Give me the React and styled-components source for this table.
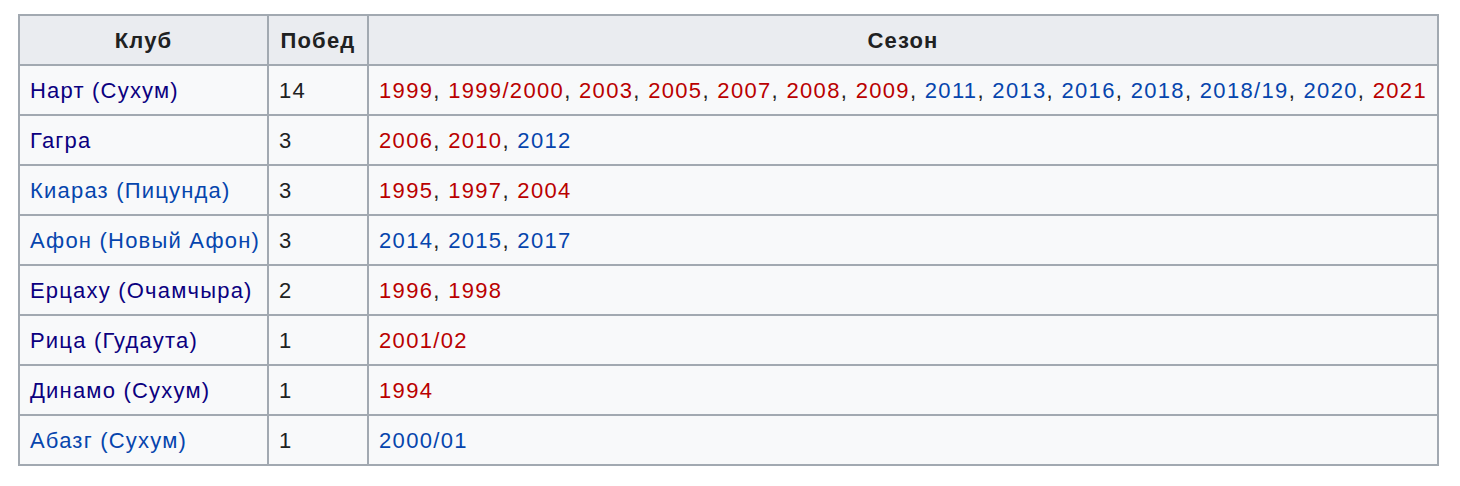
import React from "react";
import styled, { createGlobalStyle } from "styled-components";

const GlobalStyle = createGlobalStyle`
  body {
    margin: 0;
    background: #ffffff;
    font-family: "Liberation Sans", Arial, sans-serif;
  }
`;

const Page = styled.div`
  padding: 14px 21px 0 18px;
`;

const Table = styled.table`
  width: 1421px;
  border-collapse: collapse;
  table-layout: fixed;
  background: #f8f9fa;
  color: #202122;
  font-size: 22px;
  letter-spacing: 1.2px;
  border: 2px solid #a2a9b1;
`;

const Th = styled.th`
  height: 50px;
  padding: 1px 10px 0;
  background: #eaecf0;
  border: 2px solid #a2a9b1;
  font-weight: bold;
  text-align: center;
  box-sizing: border-box;
`;

const Td = styled.td`
  height: 50px;
  padding: 2px 10px 0;
  border: 2px solid #a2a9b1;
  white-space: nowrap;
  box-sizing: border-box;
`;

const Season = styled(Td)`
  letter-spacing: 1.33px;
`;

const colors = {
  visited: "#0b0080",
  blue: "#0645ad",
  red: "#ba0000",
};

const Link = styled.a`
  color: ${(p) => colors[p.$kind]};
  text-decoration: none;
`;

const rows = [
  {
    club: "Нарт (Сухум)",
    kind: "visited",
    wins: 14,
    seasons: [
      ["1999", "red"],
      ["1999/2000", "red"],
      ["2003", "red"],
      ["2005", "red"],
      ["2007", "red"],
      ["2008", "red"],
      ["2009", "red"],
      ["2011", "blue"],
      ["2013", "blue"],
      ["2016", "blue"],
      ["2018", "blue"],
      ["2018/19", "blue"],
      ["2020", "blue"],
      ["2021", "red"],
    ],
  },
  {
    club: "Гагра",
    kind: "visited",
    wins: 3,
    seasons: [
      ["2006", "red"],
      ["2010", "red"],
      ["2012", "blue"],
    ],
  },
  {
    club: "Киараз (Пицунда)",
    kind: "blue",
    wins: 3,
    seasons: [
      ["1995", "red"],
      ["1997", "red"],
      ["2004", "red"],
    ],
  },
  {
    club: "Афон (Новый Афон)",
    kind: "blue",
    wins: 3,
    seasons: [
      ["2014", "blue"],
      ["2015", "blue"],
      ["2017", "blue"],
    ],
  },
  {
    club: "Ерцаху (Очамчыра)",
    kind: "visited",
    wins: 2,
    seasons: [
      ["1996", "red"],
      ["1998", "red"],
    ],
  },
  {
    club: "Рица (Гудаута)",
    kind: "visited",
    wins: 1,
    seasons: [["2001/02", "red"]],
  },
  {
    club: "Динамо (Сухум)",
    kind: "visited",
    wins: 1,
    seasons: [["1994", "red"]],
  },
  {
    club: "Абазг (Сухум)",
    kind: "blue",
    wins: 1,
    seasons: [["2000/01", "blue"]],
  },
];

const App = () => {
  return (
    <Page>
      <GlobalStyle />
      <Table>
        <colgroup>
          <col style={{ width: 249 }} />
          <col style={{ width: 100 }} />
          <col />
        </colgroup>
        <thead>
          <tr>
            <Th>Клуб</Th>
            <Th>Побед</Th>
            <Th>Сезон</Th>
          </tr>
        </thead>
        <tbody>
          {rows.map((r) => (
            <tr key={r.club}>
              <Td>
                <Link href="#" $kind={r.kind}>
                  {r.club}
                </Link>
              </Td>
              <Td>{r.wins}</Td>
              <Season>
                {r.seasons.map(([year, kind], i) => (
                  <React.Fragment key={year}>
                    {i > 0 && ", "}
                    <Link href="#" $kind={kind}>
                      {year}
                    </Link>
                  </React.Fragment>
                ))}
              </Season>
            </tr>
          ))}
        </tbody>
      </Table>
    </Page>
  );
};

export default App;
